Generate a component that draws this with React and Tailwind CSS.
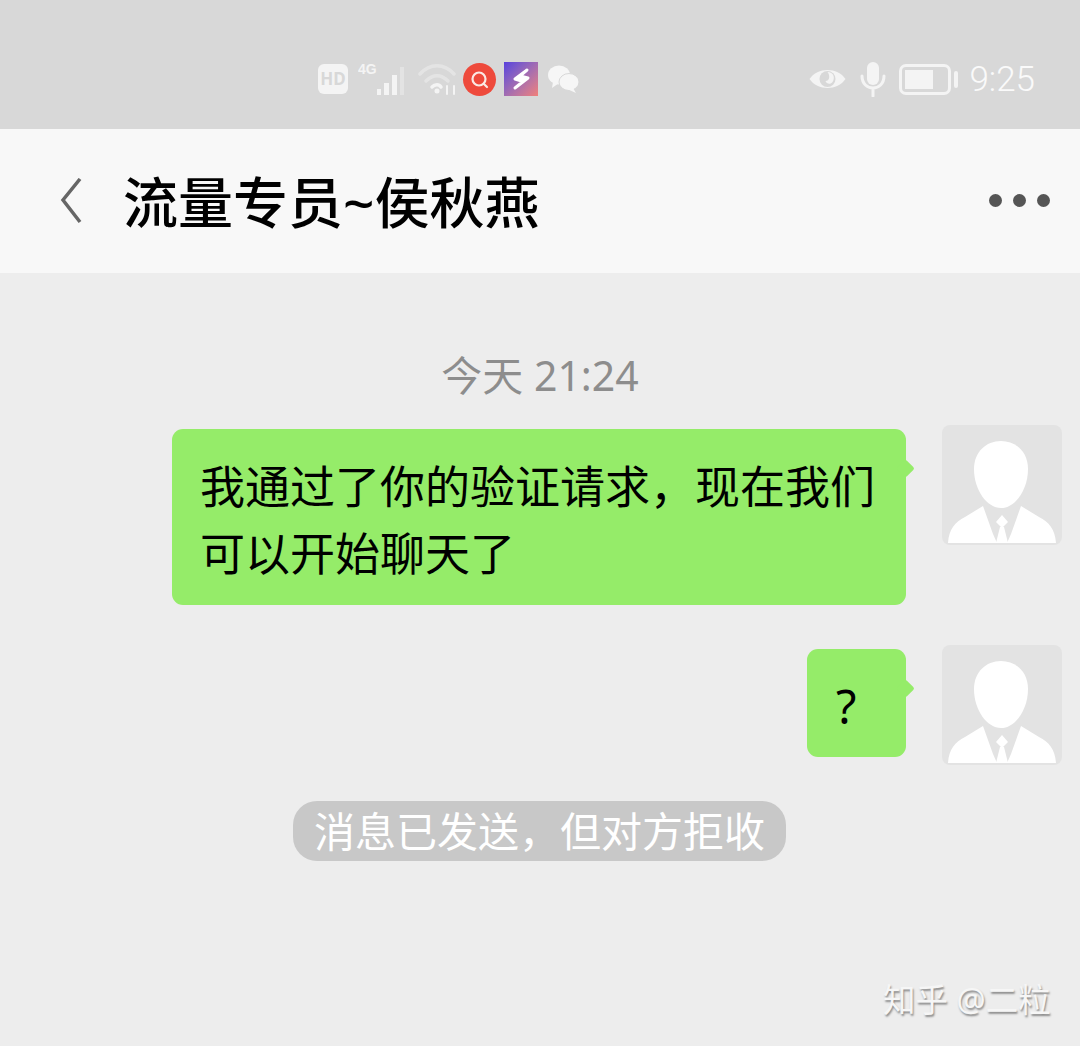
const font = { fontFamily: '"Noto Sans", "Noto Sans CJK SC", sans-serif' };

function Avatar() {
    return (
        <div className="w-[120px] h-[120px] rounded-lg bg-[#e3e3e3] overflow-hidden shrink-0">
            <svg viewBox="0 0 120 120" width="120" height="120">
                <path d="M6 118 C7 104 13 97 23 92 L41 81 L51 109 L55 118 Z M114 118 C113 104 107 97 97 92 L79 81 L69 109 L65 118 Z" fill="#fff" />
                <path d="M60 103 L54 97 L60 90 L66 97 Z M54 118 L58 102 L62 102 L66 118 Z" fill="#fff" />
                <path d="M59 16 C74 16 86 27 86 44 C86 65 73 83 59 83 C45 83 32 65 32 44 C32 27 44 16 59 16 Z" fill="#fff" />
            </svg>
        </div>
    );
}

function Tail() {
    return <div className="w-[13px] h-[13px] rotate-45 bg-[#95ec69] -ml-[7px] mt-[37px] rounded-[2px] shrink-0" />;
}

function StatusLeft() {
    return (
        <div className="flex items-center ml-[318px]">
            <div className="w-[30px] h-[30px] rounded-md bg-[#f4f4f4] flex items-center justify-center text-[#d8d8d8] text-[17px] font-bold" style={font}>HD</div>
            <svg width="52" height="36" viewBox="0 0 52 36" className="ml-[10px]" fill="#f4f4f4">
                <text x="0" y="13" fontSize="14" fontWeight="700" fontFamily="Liberation Sans">4G</text>
                <rect x="19" y="28" width="4" height="6" />
                <rect x="26" y="22" width="5" height="12" />
                <rect x="34" y="14" width="5" height="20" />
                <rect x="42" y="6" width="4" height="28" opacity="0.4" />
            </svg>
            <svg width="38" height="34" viewBox="0 0 38 34" className="ml-[8px]" fill="none" stroke="#ececec" strokeWidth="3.5" strokeLinecap="round">
                <path d="M2 12 C12 1 26 1 36 12" opacity="0.6" />
                <path d="M8 19 C15 12 23 12 30 19" opacity="0.6" />
                <path d="M14 25 C17 22 21 22 23 25" stroke="#f4f4f4" />
                <circle cx="19" cy="29" r="2.5" fill="#f4f4f4" stroke="none" />
                <path d="M29 24 V32 M36 24 V32" strokeWidth="2" stroke="#f4f4f4" />
            </svg>
            <div className="w-[33px] h-[33px] rounded-full bg-[#ee4a3c] flex items-center justify-center ml-[7px]">
                <svg width="21" height="21" viewBox="0 0 21 21" fill="none" stroke="#fbe9e4" strokeWidth="2.2" strokeLinecap="round">
                    <circle cx="10" cy="10" r="6.5" />
                    <path d="M15 15 L18 18" />
                </svg>
            </div>
            <div className="w-[34px] h-[34px] bg-gradient-to-br from-[#5a3fdd] to-[#f17f78] ml-[8px]">
                <svg width="34" height="34" viewBox="0 0 34 34" fill="#fff" stroke="#fff" strokeWidth="3" strokeLinejoin="round">
                    <path d="M23 8 L11 17 L19 19.5 L11 26 L24 16 L16 14 Z" />
                </svg>
            </div>
            <svg width="34" height="30" viewBox="0 0 34 30" className="ml-[9px]" fill="#f6f6f6">
                <ellipse cx="12" cy="11" rx="11" ry="9.5" />
                <path d="M6 18 L5 24 L12 19 Z" />
                <ellipse cx="22" cy="18" rx="10" ry="8.5" stroke="#d8d8d8" strokeWidth="1" />
                <path d="M26 24 L29 29 L20 25 Z" />
            </svg>
        </div>
    );
}

function StatusRight() {
    return (
        <div className="flex items-center mr-[45px]">
            <svg width="39" height="26" viewBox="0 0 38 26">
                <path d="M1 13 C9 1 29 1 37 13 C29 25 9 25 1 13 Z" fill="#f4f4f4" />
                <circle cx="19" cy="13" r="8" fill="#d8d8d8" />
                <path d="M19 6 C25 6 27 12 24 16 C22 19 18 18 17 15 C21 15 22 10 19 6 Z" fill="#f4f4f4" />
            </svg>
            <svg width="26" height="36" viewBox="0 0 26 36" className="ml-[13px]">
                <rect x="7" y="1" width="12" height="23" rx="6" fill="#f4f4f4" />
                <path d="M2 15 C2 31 24 31 24 15 M13 27 V35" fill="none" stroke="#f4f4f4" strokeWidth="3" strokeLinecap="round" />
            </svg>
            <div className="flex items-center ml-[13px]">
                <div className="w-[52px] h-[31px] rounded-[7px] border-[3px] border-[#f4f4f4] p-[3px]">
                    <div className="w-[28px] h-full bg-[#f4f4f4]" />
                </div>
                <div className="w-[4px] h-[17px] rounded-sm bg-[#f4f4f4] ml-[3px]" />
            </div>
            <span className="ml-[11px] text-[35px] leading-none font-light text-[#fafafa]" style={{ fontFamily: 'Roboto, sans-serif' }}>9:25</span>
        </div>
    );
}

export default function App() {
    return (
        <div className="w-[1080px] h-[1046px] bg-[#ededed] flex flex-col overflow-hidden relative" style={font}>
            {/* Status bar */}
            <div className="h-[129px] shrink-0 bg-[#d8d8d8] pt-[61px] flex items-start justify-between">
                <StatusLeft />
                <StatusRight />
            </div>

            {/* Header */}
            <div className="h-[144px] shrink-0 bg-[#f8f8f8] flex items-center">
                <svg width="24" height="46" viewBox="0 0 24 46" className="ml-[59px]" fill="none" stroke="#666" strokeWidth="3.5">
                    <path d="M21 1 L4 22 L21 44" />
                </svg>
                <h1 className="ml-[40px] mt-[1px] text-[55px] leading-none font-medium text-black" style={font}>流量专员~侯秋燕</h1>
                <div className="ml-auto mr-[30px] mb-[2px] flex gap-[11px]">
                    <div className="w-[13px] h-[13px] rounded-full bg-[#555]" />
                    <div className="w-[13px] h-[13px] rounded-full bg-[#555]" />
                    <div className="w-[13px] h-[13px] rounded-full bg-[#555]" />
                </div>
            </div>

            {/* Messages */}
            <div className="flex flex-col flex-1 pt-[77px]">
                <div className="text-center text-[41px] leading-[50px] text-[#8d8d8d]">今天 21:24</div>

                <div className="flex justify-end mt-[25px] pr-[18px]">
                    <div className="mt-[4px] w-[734px] h-[176px] rounded-[11px] bg-[#95ec69] pl-[28px] pr-[28px] pt-[24px] text-[45px] leading-[67px] text-black">
                        我通过了你的验证请求，现在我们可以开始聊天了
                    </div>
                    <Tail />
                    <div className="w-[30px] shrink-0" />
                    <Avatar />
                </div>

                <div className="flex justify-end mt-[40px] pr-[18px]">
                    <div className="mt-[4px] w-[99px] h-[108px] rounded-[11px] bg-[#95ec69] flex items-center pl-[29px] pt-[6px] text-[47px] leading-none text-black">
                        ?
                    </div>
                    <Tail />
                    <div className="w-[30px] shrink-0" />
                    <Avatar />
                </div>

                <div className="flex justify-center mt-[36px] pr-[1px]">
                    <div className="h-[60px] w-[493px] rounded-[24px] bg-[#c8c8c8] flex items-center justify-center text-[41px] leading-none text-white">
                        消息已发送，但对方拒收
                    </div>
                </div>
            </div>

            {/* Watermark overlays the screenshot */}
            <div className="absolute left-[883px] top-[980px] text-[32.5px] leading-[40px] text-[#f6f6f6] [text-shadow:1px_2px_2px_#8a8a8a]">知乎 @二粒</div>
        </div>
    );
}
